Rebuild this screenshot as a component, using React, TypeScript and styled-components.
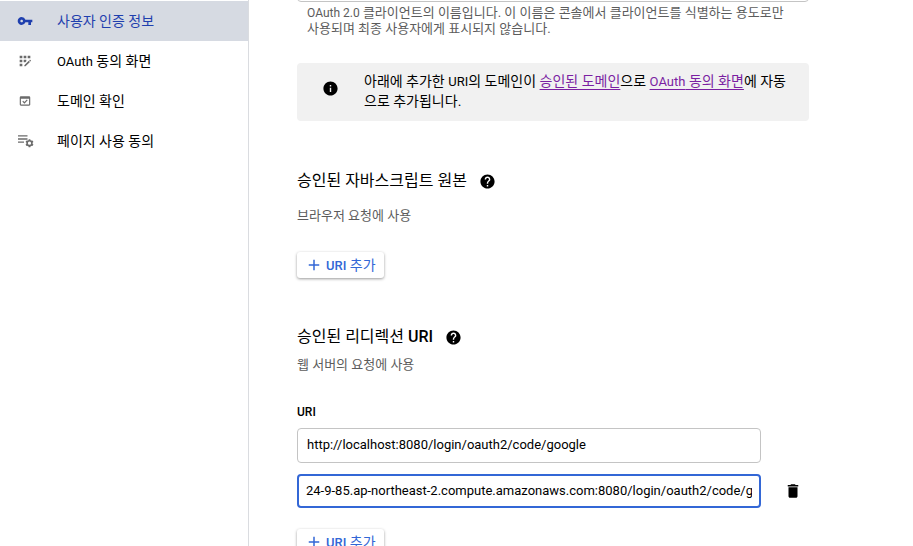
import React, { useState } from "react";
import styled, { createGlobalStyle } from "styled-components";
import {
  MdAdd,
  MdAppRegistration,
  MdDelete,
  MdHelp,
  MdInfo,
  MdOutlineDomainVerification,
  MdVpnKey,
} from "react-icons/md";

const GlobalStyle = createGlobalStyle`
  * { box-sizing: border-box; }
  body {
    margin: 0;
    background: #fff;
    color: #000;
    font-family: Roboto, "Noto Sans CJK KR", sans-serif;
    font-size: 14px;
  }
  button, input { font-family: inherit; }
`;

const Page = styled.div`
  display: flex;
  height: 100vh;
  overflow: hidden;
`;

const Sidebar = styled.nav`
  flex: 0 0 249px;
  padding-top: 1px;
  border-right: 1px solid #dadce0;
`;

const NavItem = styled.a<{ $active?: boolean }>`
  display: flex;
  align-items: center;
  gap: 24px;
  height: 40px;
  padding-left: 17px;
  line-height: 20px;
  text-decoration: none;
  color: ${(p) => (p.$active ? "#1f3fae" : "#000")};
  background: ${(p) => (p.$active ? "#d6dae2" : "transparent")};
`;

const NavIcon = styled.span<{ $active?: boolean }>`
  display: flex;
  justify-content: center;
  width: 16px;
  color: ${(p) => (p.$active ? "#1f3fae" : "#6b6b6b")};
  svg { flex: none; }
`;

const Latin = styled.span<{ $size: number }>`
  font-size: ${(p) => p.$size}px;
  line-height: 1;
`;

const Main = styled.main`
  flex: 1;
  min-width: 0;
  padding: 0 48px;
`;

const Form = styled.form`
  max-width: 512px;
`;

const ScrolledField = styled.div`
  display: flex;
  align-items: flex-end;
  height: 2px;
  overflow: hidden;
`;

const TextInput = styled.input`
  display: block;
  width: 100%;
  height: 35px;
  padding: 0 9px 2px;
  border: 1px solid #c4c4c4;
  border-radius: 4px;
  outline: none;
  background: #fff;
  color: #000;
  font-size: 13px;
`;

const ActiveInput = styled(TextInput)`
  height: 34px;
  padding: 0 7px 2px;
  border: 2px solid #3367d6;
`;

const HelperText = styled.p`
  margin: 3px 0 0;
  padding: 0 10px;
  color: #5c5c5c;
  font-size: 13px;
  line-height: 16px;
  word-break: keep-all;
`;

const Notice = styled.aside`
  display: flex;
  align-items: flex-start;
  gap: 25px;
  margin-top: 26px;
  padding: 8px 20px 10px 25px;
  border-radius: 4px;
  background: #f1f1f1;
  line-height: 20px;
  svg { flex: none; margin-top: 9px; }
  p { margin: 0; }
`;

const NoticeLink = styled.a`
  color: #7b1fa2;
  text-decoration: underline;
  text-decoration-thickness: 1px;
  text-decoration-skip-ink: none;
  text-underline-offset: 3px;
`;

const Section = styled.section<{ $top: number }>`
  margin-top: ${(p) => p.$top}px;
`;

const Heading = styled.div`
  display: flex;
  align-items: center;
  gap: 12px;
  h2 {
    margin: 0;
    font-size: 16px;
    font-weight: 400;
    line-height: 24px;
  }
  b { font-weight: 500; }
`;

const IconButton = styled.button`
  display: flex;
  padding: 0;
  border: 0;
  background: none;
  color: #000;
  cursor: pointer;
`;

const Description = styled.p<{ $top: number }>`
  margin: ${(p) => p.$top}px 0 0;
  color: #5c5c5c;
  font-size: 13px;
  line-height: 16px;
`;

const AddButton = styled.button<{ $top: number }>`
  display: flex;
  align-items: center;
  gap: 3px;
  height: 26px;
  margin-top: ${(p) => p.$top}px;
  padding: 0 8px;
  border: 0;
  border-radius: 3px;
  background: #fff;
  box-shadow: 0 1px 3px rgba(0, 0, 0, 0.4);
  color: #3367d6;
  font-size: 14px;
  line-height: 20px;
  cursor: pointer;
  b { font-size: 13px; font-weight: 500; line-height: 1; }
`;

const FieldLabel = styled.label`
  display: block;
  margin: 31px 0 8px;
  font-size: 12px;
  font-weight: 500;
  line-height: 16px;
`;

const UriRow = styled.div`
  display: flex;
  align-items: center;
  gap: 23px;
  margin-bottom: 11px;
`;

const UriCell = styled.div`
  flex: 1;
  min-width: 0;
`;

const RowAction = styled.div`
  flex: 0 0 25px;
`;

const ListSettingsIcon = () => (
  <svg width="18" height="14" viewBox="-2 0 18 14" fill="none" stroke="currentColor" aria-hidden="true">
    <path d="M0 1.8h9.5M0 5h9.5M0 8.2h6" strokeWidth="1.3" />
    <circle cx="11.5" cy="9.2" r="2.4" strokeWidth="1.6" />
    <path
      d="M11.5 5.2v1.4M11.5 11.8v1.4M8 7.2l1.2.7M13.8 10.5l1.2.7M8 11.2l1.2-.7M13.8 7.9l1.2-.7"
      strokeWidth="1.8"
    />
  </svg>
);

const navItems = [
  { label: "사용자 인증 정보", icon: <MdVpnKey size={16} />, active: true },
  { latin: "OAuth", label: " 동의 화면", icon: <MdAppRegistration size={16} /> },
  { label: "도메인 확인", icon: <MdOutlineDomainVerification size={14} /> },
  { label: "페이지 사용 동의", icon: <ListSettingsIcon /> },
];

const HelpButton = () => (
  <IconButton type="button" aria-label="도움말">
    <MdHelp size={17} />
  </IconButton>
);

const AddUri = ({ top }: { top: number }) => (
  <AddButton type="button" $top={top}>
    <MdAdd size={18} />
    <span>
      <b>URI</b> 추가
    </span>
  </AddButton>
);

export default function App() {
  const [name, setName] = useState("");
  const [first, setFirst] = useState("http://localhost:8080/login/oauth2/code/google");
  const [second, setSecond] = useState(
    "24-9-85.ap-northeast-2.compute.amazonaws.com:8080/login/oauth2/code/google"
  );

  return (
    <Page>
      <GlobalStyle />
      <Sidebar>
        {navItems.map((item) => (
          <NavItem key={item.label} href="#" $active={item.active} aria-current={item.active ? "page" : undefined}>
            <NavIcon $active={item.active}>{item.icon}</NavIcon>
            <span>
              {item.latin && <Latin $size={13}>{item.latin}</Latin>}
              {item.label}
            </span>
          </NavItem>
        ))}
      </Sidebar>
      <Main>
        <Form>
          <ScrolledField>
            <TextInput aria-label="이름" value={name} onChange={(e) => setName(e.target.value)} />
          </ScrolledField>
          <HelperText>
            <Latin $size={12}>OAuth 2.0</Latin> 클라이언트의 이름입니다. 이 이름은 콘솔에서 클라이언트를 식별하는
            용도로만 사용되며 최종 사용자에게 표시되지 않습니다.
          </HelperText>
          <Notice>
            <MdInfo size={17} />
            <p>
              아래에 추가한 <Latin $size={13}>URI</Latin>의 도메인이 <NoticeLink href="#">승인된 도메인</NoticeLink>
              으로{" "}
              <NoticeLink href="#">
                <Latin $size={13}>OAuth</Latin> 동의 화면
              </NoticeLink>
              에 자동으로 추가됩니다.
            </p>
          </Notice>
          <Section $top={48}>
            <Heading>
              <h2>승인된 자바스크립트 원본</h2>
              <HelpButton />
            </Heading>
            <Description $top={15}>브라우저 요청에 사용</Description>
            <AddUri top={28} />
          </Section>
          <Section $top={47}>
            <Heading>
              <h2>
                승인된 리디렉션 <b>URI</b>
              </h2>
              <HelpButton />
            </Heading>
            <Description $top={8}>웹 서버의 요청에 사용</Description>
            <FieldLabel htmlFor="uri-1">URI</FieldLabel>
            <UriRow>
              <UriCell>
                <TextInput id="uri-1" value={first} onChange={(e) => setFirst(e.target.value)} />
              </UriCell>
              <RowAction />
            </UriRow>
            <UriRow>
              <UriCell>
                <ActiveInput aria-label="URI 2" value={second} onChange={(e) => setSecond(e.target.value)} />
              </UriCell>
              <RowAction>
                <IconButton type="button" aria-label="삭제">
                  <MdDelete size={18} />
                </IconButton>
              </RowAction>
            </UriRow>
            <AddUri top={21} />
          </Section>
        </Form>
      </Main>
    </Page>
  );
}
